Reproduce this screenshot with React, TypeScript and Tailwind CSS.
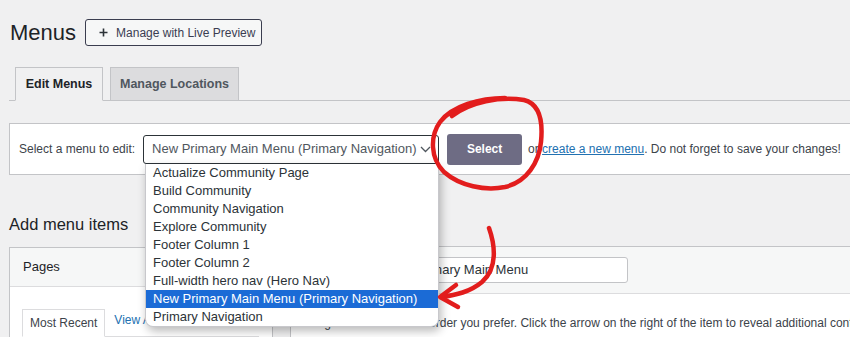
import React from 'react';

const menus = [
  'Actualize Community Page',
  'Build Community',
  'Community Navigation',
  'Explore Community',
  'Footer Column 1',
  'Footer Column 2',
  'Full-width hero nav (Hero Nav)',
  'New Primary Main Menu (Primary Navigation)',
  'Primary Navigation',
];
const selected = 'New Primary Main Menu (Primary Navigation)';

const App: React.FC = () => {
  return (
    <div className="relative w-[850px] h-[337px] overflow-hidden bg-[#f0f0f1] text-[#3c434a] font-['Liberation_Sans',Arial,sans-serif]">
      <div className="pl-[9px]">
        {/* Title row */}
        <div className="flex items-center gap-[9px] pt-[19px]">
          <h1 className="text-[22px] leading-[27px] text-[#1d2327] pl-px">Menus</h1>
          <button className="h-[27px] w-[177px] flex items-center gap-[8px] pl-[13px] rounded-[3px] border border-[#3a3d4f] bg-[#f6f7f7] text-[12px] text-[#3a3d52]">
            <svg className="w-[9px] h-[9px]" viewBox="0 0 9 9">
              <path d="M4.5 0.5v8M0.5 4.5h8" stroke="#2c3338" strokeWidth={1.6} />
            </svg>
            <span>Manage with Live Preview</span>
          </button>
        </div>

        {/* Tabs */}
        <div className="mt-[21px] h-[34px] flex items-end gap-[7px] pl-[6px] border-b border-[#c3c4c7]">
          <div className="w-[88px] h-[34px] -mb-px flex items-center justify-center border border-[#c3c4c7] border-b-[#f0f0f1] bg-[#f0f0f1] text-[12.5px] font-bold text-[#1d2327]">
            Edit Menus
          </div>
          <div className="w-[129px] h-[34px] -mb-px flex items-center justify-center border border-[#c3c4c7] bg-[#dcdcde] text-[12.5px] font-bold text-[#50575e]">
            Manage Locations
          </div>
        </div>

        {/* Manage menus bar */}
        <div className="mt-[22px] w-[900px] h-[52px] flex items-center pl-[9px] bg-white border border-[#c3c4c7] whitespace-nowrap text-[12px]">
          <span className="text-[#3c434a]">Select a menu to edit:</span>
          <div className="ml-[8px] w-[296px] h-[29px] flex items-center justify-between pl-[8px] pr-[7px] rounded-[3px] border border-[#2c3338] bg-white text-[13px] text-[#50575e]">
            <span>New Primary Main Menu (Primary Navigation)</span>
            <svg className="w-[11px] h-[7px]" viewBox="0 0 11 7">
              <path d="M1 1l4.5 4.5L10 1" fill="none" stroke="#50575e" strokeWidth={1.3} />
            </svg>
          </div>
          <button className="ml-[8px] w-[75px] h-[31px] rounded-[3px] bg-[#6e6c84] text-white font-bold text-[12px]">Select</button>
          <span className="ml-[6px]">
            or <a className="text-[#2271b1] underline">create a new menu</a>. Do not forget to save your changes!
          </span>
        </div>

        {/* Columns */}
        <div className="flex">
          <div className="w-[264px] shrink-0">
            <h2 className="mt-[38px] mb-[12px] text-[16.5px] leading-[22px] text-[#1d2327]">Add menu items</h2>
            <div className="border border-[#c3c4c7] bg-white">
              <div className="h-[39px] flex items-center pl-[13px] bg-[#f6f7f7] border-b border-[#dcdcde] text-[13px] text-[#1d2327]">Pages</div>
              <div className="pt-[22px] pl-[12px] pr-[13px] text-[12px]">
                <div className="flex items-end h-[28px]">
                  <div className="h-[28px] px-[7px] flex items-center border border-[#dcdcde] border-b-white bg-white text-[#3c434a]">Most Recent</div>
                  <a className="ml-[9px] mb-[8px] text-[#2271b1]">View All</a>
                </div>
                <div className="h-[40px] border border-[#dcdcde] bg-[#f6f7f7] -mt-px"></div>
              </div>
            </div>
          </div>

          <div className="ml-[17px] w-[600px] shrink-0">
            <h2 className="mt-[38px] mb-[11px] text-[16.5px] leading-[22px] text-[#1d2327]">Menu structure</h2>
            <div className="border border-[#c3c4c7] bg-white">
              <div className="h-[47px] flex items-center pl-[10px] bg-[#f6f7f7] border-b border-[#dcdcde] text-[13px]">
                <span className="text-[#1d2327]">Menu Name</span>
                <div className="ml-[5px] w-[251px] h-[26px] flex items-center pl-[8px] rounded-[3px] border border-[#c3c4c7] bg-white text-[#2c3338]">
                  New Primary Main Menu
                </div>
              </div>
              <p className="pt-[20px] pl-[14px] pb-[20px] text-[12px] whitespace-nowrap text-[#3c434a]">
                Drag the items into the order you prefer. Click the arrow on the right of the item to reveal additional configuration options.
              </p>
            </div>
          </div>
        </div>
      </div>

      {/* Open select list */}
      <ul className="absolute left-[145px] top-[164px] w-[294px] h-[163px] bg-white border border-[#c8c8cc] border-t-0 rounded-b-[8px] shadow-[2px_4px_10px_rgba(0,0,0,0.28)] text-[13px] overflow-hidden">
        {menus.map(m => (
          <li key={m} className={`h-[18px] leading-[18px] pl-[7px] ${m === selected ? 'bg-[#1b6bd6] text-white' : 'text-[#2c3338]'}`}>{m}</li>
        ))}
      </ul>

      {/* Red annotations */}
      <svg className="absolute inset-0 w-[850px] h-[337px] pointer-events-none" viewBox="0 0 850 337">
        <g fill="none" stroke="#e21d1d" strokeWidth={4.5} strokeLinecap="round" strokeLinejoin="round">
          <path d="M452 116 C 470 102, 500 96, 524 100 C 540 104, 543 122, 541 142 C 539 162, 527 182, 505 187 C 485 191, 460 186, 444 172 C 430 158, 430 136, 440 122 C 452 106, 480 98, 505 98" />
          <path d="M489 228 C 495 245, 498 268, 482 282 C 470 292, 456 295, 441 297" />
          <path d="M456 285 L440 297 L458 307" />
        </g>
      </svg>
    </div>
  );
};

export default App;
